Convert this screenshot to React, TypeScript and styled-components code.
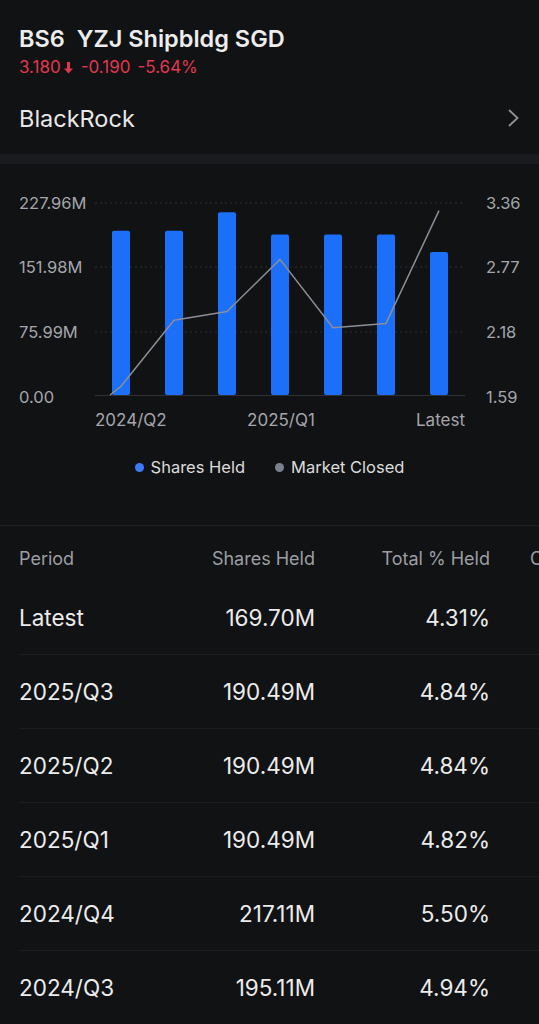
import * as React from "react";
import styled, { createGlobalStyle } from "styled-components";

const GlobalStyle = createGlobalStyle`
    html, body {
        margin: 0;
        padding: 0;
        background: #111214;
    }
    body {
        font-family: Inter, "Noto Sans", "Liberation Sans", sans-serif;
        color: #ececec;
        overflow: hidden;
    }
`;

const Page = styled.div`
    width: 539px;
    min-height: 1024px;
    background: #111214;
    overflow: hidden;
`;

const Header = styled.div`
    padding: 24px 19px 0;
`;

const Title = styled.div`
    font-size: 23.5px;
    font-weight: 600;
    line-height: 30px;
    color: #ededed;
    white-space: pre;
`;

const PriceLine = styled.div`
    display: flex;
    align-items: center;
    gap: 7px;
    margin-top: 3px;
    font-size: 17px;
    line-height: 20px;
    color: #e0384f;
`;

const Quote = styled.span`
    display: flex;
    align-items: center;
    gap: 2px;
`;

const HolderRow = styled.div`
    display: flex;
    align-items: center;
    justify-content: space-between;
    height: 56px;
    margin-top: 13px;
    padding: 0 19px;
    font-size: 23.5px;
    color: #e8e8e8;
`;

const Band = styled.div`
    height: 10px;
    margin-top: 8px;
    background: #1a1b1e;
`;

const ChartSection = styled.div`
    padding-top: 16px;
    border-bottom: 1px solid #1e1f22;
    padding-bottom: 46px;
`;

const Legend = styled.div`
    display: flex;
    justify-content: center;
    gap: 30px;
    height: 24px;
    margin-top: 10px;
`;

const LegendItem = styled.div`
    display: flex;
    align-items: center;
    gap: 7px;
    font-size: 16.5px;
    color: #dcdcdc;
`;

const Dot = styled.span<{ color: string }>`
    width: 9px;
    height: 9px;
    border-radius: 50%;
    background: ${(p) => p.color};
`;

const Table = styled.div`
    overflow: hidden;
`;

const Row = styled.div<{ head?: boolean }>`
    display: grid;
    grid-template-columns: 181px 115px 175px 40px 120px;
    align-items: center;
    width: 700px;
    margin-left: 19px;
    height: ${(p) => (p.head ? "46px" : "73px")};
    padding-top: ${(p) => (p.head ? "9px" : "0")};
    box-sizing: content-box;
    border-bottom: ${(p) => (p.head ? "none" : "1px solid #1c1d20")};
    font-size: ${(p) => (p.head ? "18px" : "22.5px")};
    color: ${(p) => (p.head ? "#9c9ea3" : "#ececec")};
`;

const Cell = styled.div<{ align?: "left" | "right" }>`
    text-align: ${(p) => p.align || "left"};
    white-space: nowrap;
`;

const shares = [195.11, 195.11, 217.11, 190.49, 190.49, 190.49, 169.7];
const prices = [1.67, 2.28, 2.36, 2.84, 2.21, 2.25, 3.29];

const yShares = (v: number) => 395 - (v / 227.96) * 192;
const yPrice = (v: number) => 395 - ((v - 1.59) / (3.36 - 1.59)) * 192;
const xAt = (i: number) => 121 + i * 53;

const Chart = () => {
    const linePts = ["110,395", ...prices.map((p, i) => `${xAt(i)},${yPrice(p).toFixed(1)}`)].join(" ");
    const axisStyle = { fontSize: 16.5, fill: "#a4a6ab" };
    const tickStyle = { fontSize: 17, fill: "#a4a6ab" };
    return (
        <svg width="539" height="265" viewBox="0 180 539 265" style={{ display: "block" }}>
            {[203, 267, 332].map((y) => (
                <line key={y} x1="95" x2="465" y1={y} y2={y} stroke="#2a2c30" strokeDasharray="2 3" />
            ))}
            <line x1="95" x2="465" y1="395.5" y2="395.5" stroke="#2e3034" />
            {shares.map((v, i) => {
                const top = yShares(v);
                return <rect key={i} x={xAt(i) - 9} y={top} width="18" height={395 - top} rx="2" fill="#1b6ff8" />;
            })}
            <polyline points={linePts} fill="none" stroke="#8a8f98" strokeWidth="1.5" strokeLinejoin="round" />
            {[
                ["227.96M", 203],
                ["151.98M", 267],
                ["75.99M", 332],
                ["0.00", 397],
            ].map(([t, y]) => (
                <text key={t} x="19" y={(y as number) + 6} style={axisStyle}>
                    {t}
                </text>
            ))}
            {[
                ["3.36", 203],
                ["2.77", 267],
                ["2.18", 332],
                ["1.59", 397],
            ].map(([t, y]) => (
                <text key={t} x="486" y={(y as number) + 6} style={axisStyle}>
                    {t}
                </text>
            ))}
            <text x="95" y="426" style={tickStyle}>2024/Q2</text>
            <text x="281" y="426" textAnchor="middle" style={tickStyle}>2025/Q1</text>
            <text x="465" y="426" textAnchor="end" style={tickStyle}>Latest</text>
        </svg>
    );
};

const rows = [
    ["Latest", "169.70M", "4.31%"],
    ["2025/Q3", "190.49M", "4.84%"],
    ["2025/Q2", "190.49M", "4.84%"],
    ["2025/Q1", "190.49M", "4.82%"],
    ["2024/Q4", "217.11M", "5.50%"],
    ["2024/Q3", "195.11M", "4.94%"],
];

export default function App() {
    return (
        <Page>
            <GlobalStyle />
            <Header>
                <Title>{"BS6  YZJ Shipbldg SGD"}</Title>
                <PriceLine>
                    <Quote>
                        3.180
                        <svg width="11" height="13" viewBox="0 0 11 13">
                            <path d="M4 1h3v6.5h3L5.5 12.5 1 7.5h3z" fill="#e0384f" />
                        </svg>
                    </Quote>
                    <span>-0.190</span>
                    <span>-5.64%</span>
                </PriceLine>
            </Header>
            <HolderRow>
                <span>BlackRock</span>
                <svg width="14" height="20" viewBox="0 0 14 20">
                    <polyline points="3,2 11.5,10 3,18" fill="none" stroke="#8f9196" strokeWidth="1.8" />
                </svg>
            </HolderRow>
            <Band />
            <ChartSection>
                <Chart />
                <Legend>
                    <LegendItem>
                        <Dot color="#3b7cf6" />
                        Shares Held
                    </LegendItem>
                    <LegendItem>
                        <Dot color="#7a8290" />
                        Market Closed
                    </LegendItem>
                </Legend>
            </ChartSection>
            <Table>
                <Row head>
                    <Cell>Period</Cell>
                    <Cell align="right">Shares Held</Cell>
                    <Cell align="right">Total % Held</Cell>
                    <Cell />
                    <Cell>Change</Cell>
                </Row>
                {rows.map((r) => (
                    <Row key={r[0]}>
                        <Cell>{r[0]}</Cell>
                        <Cell align="right">{r[1]}</Cell>
                        <Cell align="right">{r[2]}</Cell>
                    </Row>
                ))}
            </Table>
        </Page>
    );
}
